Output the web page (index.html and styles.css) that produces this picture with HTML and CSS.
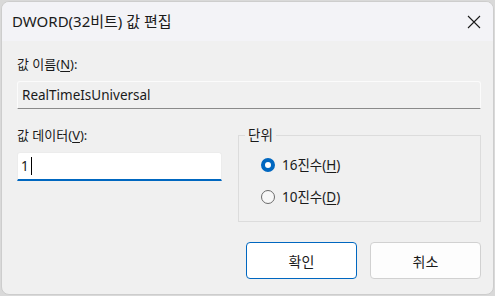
FILE: index.html
```html
<!DOCTYPE html>
<html lang="ko">
<head>
<meta charset="UTF-8" />
<meta name="viewport" content="width=device-width, initial-scale=1" />
<title>DWORD(32비트) 값 편집</title>
<link rel="stylesheet" href="styles.css">
</head>
<body>
  <div class="window">
    <div class="titlebar">
      <span class="title">DWORD(32비트) 값 편집</span>
      <svg class="close" width="14" height="14" viewBox="0 0 14 14" aria-label="닫기">
        <path d="M1 1 L13 13 M13 1 L1 13" stroke="#1b1b1b" stroke-width="1.1" fill="none" />
      </svg>
    </div>

    <div class="content">
      <div class="field-label">값 이름(<u>N</u>):</div>
      <div class="name-box">RealTimeIsUniversal</div>

      <div class="middle">
        <div class="data-col">
          <div class="field-label">값 데이터(<u>V</u>):</div>
          <div class="data-box">1<span class="caret"></span></div>
        </div>

        <fieldset class="group">
          <legend>단위</legend>
          <label class="radio-row">
            <span class="radio checked"></span>
            <span>16진수(<u>H</u>)</span>
          </label>
          <label class="radio-row">
            <span class="radio"></span>
            <span>10진수(<u>D</u>)</span>
          </label>
        </fieldset>
      </div>

      <div class="buttons">
        <button class="btn primary">확인</button>
        <button class="btn">취소</button>
      </div>
    </div>
  </div>
</body>
</html>
```

FILE: styles.css
```css
/* Reset */
* {
  box-sizing: border-box;
}
body {
  margin: 0;
  height: 296px;
  overflow: hidden;
  background: #d9d9d9;
  font-family: 'Noto Sans', 'Noto Sans CJK KR', sans-serif;
  color: #1a1a1a;
  padding: 1px;
}

/* Window */
.window {
  height: 294px;
  background: #f0f0f0;
  border: 1px solid #cdcdcd;
  border-radius: 8px;
  overflow: hidden;
  display: flex;
  flex-direction: column;
}
.titlebar {
  height: 39px;
  flex: none;
  background: #f3f3f7;
  display: flex;
  align-items: center;
  justify-content: space-between;
  padding: 0 12px 0 10px;
}
.title {
  font-size: 15px;
  line-height: 18px;
  margin-top: -1px;
}
.close {
  display: block;
}

/* Content */
.content {
  flex: 1;
  padding: 15px 12px 0 15px;
  font-size: 13px;
  line-height: 16px;
}
.field-label {
  height: 16px;
}
u {
  text-underline-offset: 2px;
}
.name-box {
  margin-top: 9px;
  height: 28px;
  padding: 0 4px;
  display: flex;
  align-items: center;
  font-size: 13.5px;
  background: #f0f0f0;
  border: 1px solid #fbfbfb;
  border-bottom: 1px solid #8a8a8a;
  border-radius: 3px 3px 0 0;
}

.middle {
  display: grid;
  grid-template-columns: 205px 243px;
  justify-content: space-between;
  align-items: start;
  margin-top: 18px;
}
.data-box {
  margin-top: 9px;
  height: 29px;
  padding: 0 3px;
  display: flex;
  align-items: center;
  font-size: 13.5px;
  background: #ffffff;
  border: 1px solid #ececec;
  border-bottom: 2px solid #0067c0;
  border-radius: 3px 3px 0 0;
}
.caret {
  display: inline-block;
  width: 1px;
  height: 18px;
  background: #000;
  margin-left: 2px;
}

/* Group box */
.group {
  margin: 0;
  min-width: 0;
  border: 1px solid #dcdcdc;
  padding: 12px 0 0 0;
  height: 95px;
}
.group legend {
  padding: 0 3px;
  margin-left: 6px;
  font-size: 13.5px;
  line-height: 16px;
}
.radio-row {
  display: flex;
  align-items: center;
  gap: 7px;
  height: 20px;
  margin: 0 0 12px 22px;
  font-size: 13.5px;
}
.radio {
  width: 14px;
  height: 14px;
  border-radius: 50%;
  border: 1px solid #6b6b6b;
  background: #f7f7f7;
  flex: none;
}
.radio.checked {
  border: 4px solid #0067c0;
  background: #ffffff;
}

/* Buttons */
.buttons {
  display: flex;
  justify-content: flex-end;
  gap: 13px;
  margin-top: 20px;
}
.btn {
  width: 111px;
  height: 37px;
  font-family: inherit;
  font-size: 14px;
  color: #1a1a1a;
  background: #fdfdfd;
  border: 1px solid #d1d1d1;
  border-radius: 4px;
}
.btn.primary {
  background: #ffffff;
  border-color: #0067c0;
}
```
